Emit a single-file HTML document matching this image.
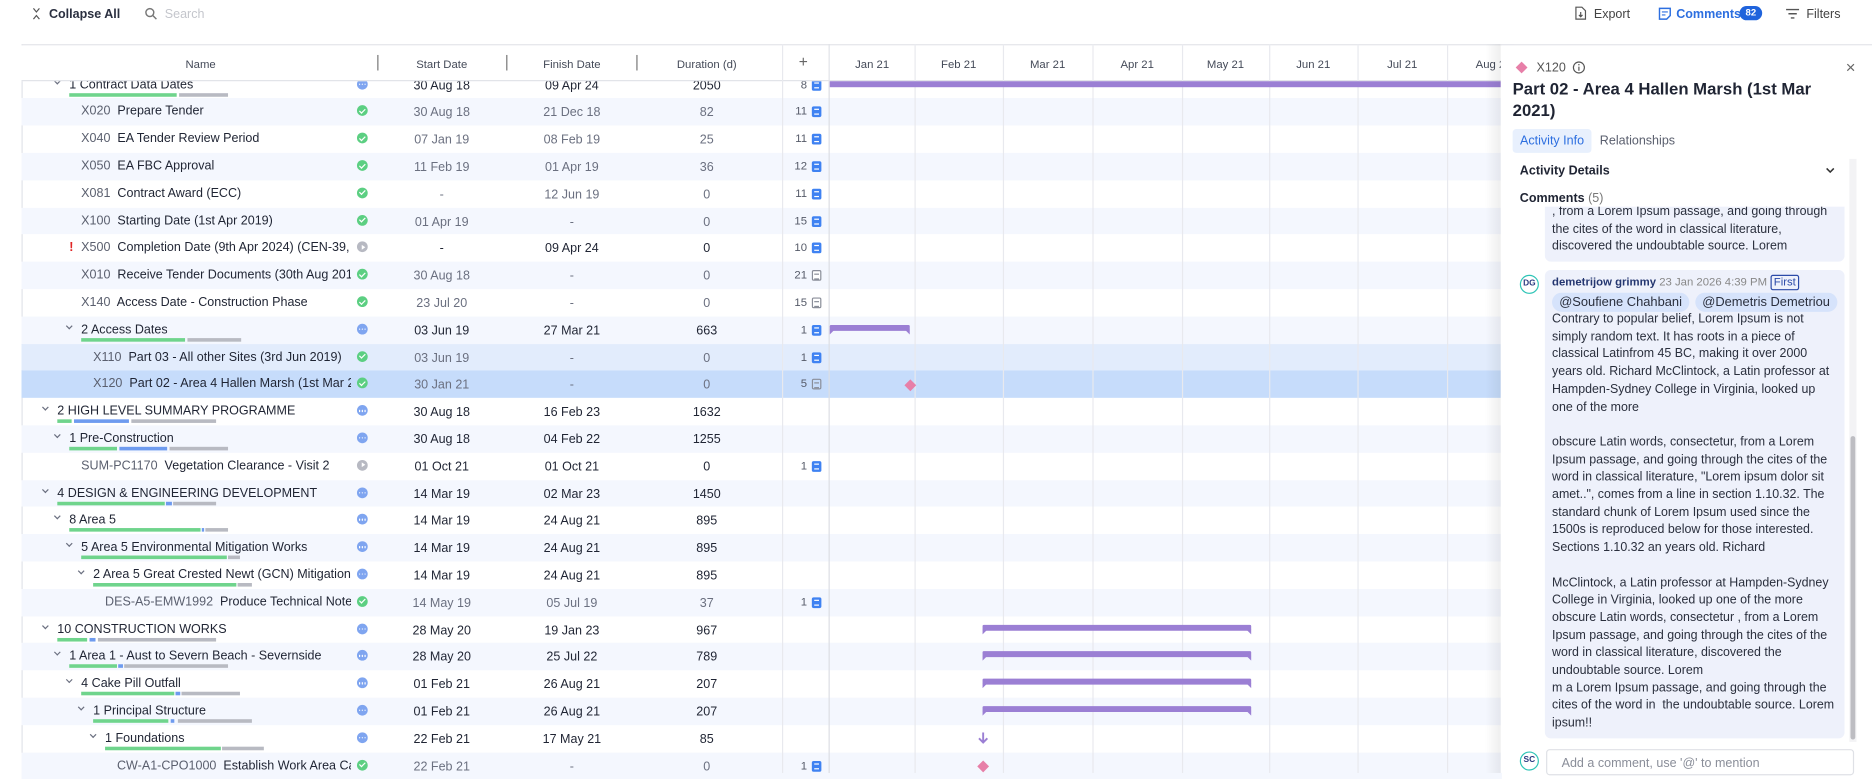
<!DOCTYPE html>
<html><head><meta charset="utf-8"><style>
*{box-sizing:border-box;margin:0;padding:0}
html,body{width:1872px;height:773px;overflow:hidden;background:#fff}
#s{position:absolute;left:0;top:0;width:1568px;height:647px;transform:scale(1.19388,1.1947);transform-origin:0 0;font-family:"Liberation Sans",sans-serif;color:#1f2433;font-size:10.5px}
.a{position:absolute}
.row{position:absolute;left:18px;width:1240px;height:22.8px}
.row.o{background:#f4f7fe}
.nm{position:absolute;top:5px;white-space:nowrap;overflow:hidden;font-size:10.5px}
.nm i{font-style:normal;color:#5a5f6e}
.c{position:absolute;top:6px;text-align:center;width:90px;font-size:10.5px}
.sd{left:307px}.fd{left:416px}.du{left:529px}
.g{color:#6b7080}
.st{position:absolute;left:281px;top:6px;width:9px;height:9px;border-radius:50%}
.ok{background:#5ccf82}
.ok:after{content:"";position:absolute;left:3px;top:1.5px;width:2px;height:4px;border:solid #fff;border-width:0 1.3px 1.3px 0;transform:rotate(45deg)}
.dt{background:#7fa5f0}
.dt:after{content:"";position:absolute;left:4px;top:4px;width:1.4px;height:1.4px;background:#fff;border-radius:50%;box-shadow:-2.3px 0 0 #fff,2.3px 0 0 #fff}
.pl{background:#b7b9c2}
.pl:after{content:"";position:absolute;left:3.5px;top:2.5px;border-left:3px solid #fff;border-top:2px solid transparent;border-bottom:2px solid transparent}
.cm{position:absolute;left:640px;top:6px;width:18px;text-align:right;font-size:9.5px;color:#555a68}
.ic{position:absolute;left:662px;top:7px;width:8px;height:9px;border-radius:1.5px;background:#3f82f2}
.ic:after{content:"";position:absolute;left:1.5px;top:2px;width:4px;height:3px;border-top:1px solid #fff;border-bottom:1px solid #fff}
.ic.gy{background:#fff;border:1px solid #8a8e99}
.ic.gy:after{left:1px;top:1.5px;border-color:#8a8e99}
.chev{position:absolute;top:6px;width:4px;height:4px;border:solid #6b7080;border-width:0 1px 1px 0;transform:rotate(45deg)}
.pb{position:absolute;height:3px;top:18px}
.G{background:#6fd48c}.B{background:#6e9bef}.Y{background:#b8bac2}
.vl{position:absolute;top:37px;width:1px;height:610px;background:#e8e9ee}
.hd{position:absolute;top:49px;font-size:9.5px;color:#444a58;text-align:center}
.bar{position:absolute;height:5px;background:#9b7fd4;border-radius:1px}
.bar:before,.bar:after{content:"";position:absolute;top:4px;border-top:4px solid #9b7fd4}
.bar:before{left:0;border-right:4px solid transparent}
.bar:after{right:0;border-left:4px solid transparent}
.dia{position:absolute;width:7px;height:7px;background:#e77fa8;transform:rotate(45deg)}
.cmt{font-size:10.4px;line-height:14.7px;color:#2a2f3d}
.chip{height:16px;padding:0 6px;border-radius:8px;background:#d6e3fb;font-size:10.8px;line-height:16px;color:#2a2f3d;white-space:nowrap;margin-right:5px}
</style></head><body><div id="s">

<!-- toolbar -->
<svg class="a" style="left:27px;top:6px" width="7" height="11" viewBox="0 0 7 11"><path d="M1 1l2.5 3L6 1M1 10l2.5-3L6 10" stroke="#555" fill="none"/></svg>
<div class="a" style="left:41px;top:6px;font-size:10.5px;font-weight:bold;color:#2b3040">Collapse All</div>
<svg class="a" style="left:121px;top:6px" width="11" height="11" viewBox="0 0 11 11"><circle cx="4.5" cy="4.5" r="3.3" fill="none" stroke="#777" stroke-width="1.2"/><path d="M7 7l3 3" stroke="#777" stroke-width="1.2"/></svg>
<div class="a" style="left:138px;top:6px;font-size:10.5px;color:#c4c6cc">Search</div>
<svg class="a" style="left:1319px;top:5px" width="10" height="12" viewBox="0 0 10 12"><path d="M1 1h5l3 3v7H1z" fill="none" stroke="#555" stroke-width="1"/><path d="M5 5v4M3.5 7.5L5 9l1.5-1.5" stroke="#555" fill="none"/></svg>
<div class="a" style="left:1335px;top:6px;font-size:10.5px;color:#444">Export</div>
<svg class="a" style="left:1389px;top:6px" width="11" height="11" viewBox="0 0 11 11"><path d="M1 1h9v6l-3 3H1z" fill="none" stroke="#2d6fe0" stroke-width="1.2"/><path d="M3 4h5M3 6.5h3" stroke="#2d6fe0"/></svg>
<div class="a" style="left:1404px;top:6px;font-size:10.5px;color:#2d6fe0;font-weight:bold">Comments</div>
<div class="a" style="left:1457px;top:5px;width:19px;height:12px;border-radius:6px;background:#1f63dc;color:#fff;font-size:8px;font-weight:bold;text-align:center;line-height:12px">82</div>
<svg class="a" style="left:1496px;top:7px" width="11" height="9" viewBox="0 0 11 9"><path d="M0 1h11M2 4.5h7M4 8h3" stroke="#555" stroke-width="1.2"/></svg>
<div class="a" style="left:1513px;top:6px;font-size:10.5px;color:#444">Filters</div>

<!-- grid frame -->
<div class="a" style="left:18px;top:37px;width:1250px;height:1px;background:#e1e3e8"></div>
<div class="a" style="left:18px;top:37px;width:1px;height:610px;background:#e1e3e8"></div>

<!-- rows -->
<div class="row" style="top:59.6px"><span class="chev" style="left:28px"></span><div class="nm" style="left:40px">1 Contract Data Dates</div><div class="pb G" style="left:40px;width:90px"></div><div class="pb Y" style="left:132px;width:41px"></div><div class="st dt"></div><div class="c sd">30 Aug 18</div><div class="c fd">09 Apr 24</div><div class="c du">2050</div><div class="cm">8</div><div class="ic"></div></div>
<div class="row o" style="top:82.4px"><div class="nm" style="left:50px"><i>X020</i>&nbsp; Prepare Tender</div><div class="st ok"></div><div class="c sd g">30 Aug 18</div><div class="c fd g">21 Dec 18</div><div class="c du g">82</div><div class="cm">11</div><div class="ic"></div></div>
<div class="row" style="top:105.2px"><div class="nm" style="left:50px"><i>X040</i>&nbsp; EA Tender Review Period</div><div class="st ok"></div><div class="c sd g">07 Jan 19</div><div class="c fd g">08 Feb 19</div><div class="c du g">25</div><div class="cm">11</div><div class="ic"></div></div>
<div class="row o" style="top:128px"><div class="nm" style="left:50px"><i>X050</i>&nbsp; EA FBC Approval</div><div class="st ok"></div><div class="c sd g">11 Feb 19</div><div class="c fd g">01 Apr 19</div><div class="c du g">36</div><div class="cm">12</div><div class="ic"></div></div>
<div class="row" style="top:150.8px"><div class="nm" style="left:50px"><i>X081</i>&nbsp; Contract Award (ECC)</div><div class="st ok"></div><div class="c sd g">-</div><div class="c fd g">12 Jun 19</div><div class="c du g">0</div><div class="cm">11</div><div class="ic"></div></div>
<div class="row o" style="top:173.6px"><div class="nm" style="left:50px"><i>X100</i>&nbsp; Starting Date (1st Apr 2019)</div><div class="st ok"></div><div class="c sd g">01 Apr 19</div><div class="c fd g">-</div><div class="c du g">0</div><div class="cm">15</div><div class="ic"></div></div>
<div class="row" style="top:196.4px"><div class="nm" style="left:40px;color:#e02424;font-weight:bold">!</div><div class="nm" style="left:50px;width:226px"><i>X500</i>&nbsp; Completion Date (9th Apr 2024) (CEN-39, </div><div class="st pl"></div><div class="c sd">-</div><div class="c fd">09 Apr 24</div><div class="c du">0</div><div class="cm">10</div><div class="ic"></div></div>
<div class="row o" style="top:219.2px"><div class="nm" style="left:50px;width:226px"><i>X010</i>&nbsp; Receive Tender Documents (30th Aug 2018)</div><div class="st ok"></div><div class="c sd g">30 Aug 18</div><div class="c fd g">-</div><div class="c du g">0</div><div class="cm">21</div><div class="ic gy"></div></div>
<div class="row" style="top:242px"><div class="nm" style="left:50px"><i>X140</i>&nbsp; Access Date - Construction Phase</div><div class="st ok"></div><div class="c sd g">23 Jul 20</div><div class="c fd g">-</div><div class="c du g">0</div><div class="cm">15</div><div class="ic gy"></div></div>
<div class="row o" style="top:264.8px"><span class="chev" style="left:38px"></span><div class="nm" style="left:50px">2 Access Dates</div><div class="pb G" style="left:50px;width:87px"></div><div class="pb Y" style="left:139px;width:45px"></div><div class="st dt"></div><div class="c sd">03 Jun 19</div><div class="c fd">27 Mar 21</div><div class="c du">663</div><div class="cm">1</div><div class="ic"></div></div>
<div class="row" style="top:287.6px;background:#e2ecfc"><div class="nm" style="left:60px"><i>X110</i>&nbsp; Part 03 - All other Sites (3rd Jun 2019)</div><div class="st ok"></div><div class="c sd g">03 Jun 19</div><div class="c fd g">-</div><div class="c du g">0</div><div class="cm">1</div><div class="ic"></div></div>
<div class="row" style="top:310.4px;background:#c6dcfb"><div class="nm" style="left:60px;width:216px"><i>X120</i>&nbsp; Part 02 - Area 4 Hallen Marsh (1st Mar 2021)</div><div class="st ok"></div><div class="c sd g">30 Jan 21</div><div class="c fd g">-</div><div class="c du g">0</div><div class="cm">5</div><div class="ic gy" style="background:transparent"></div></div>
<div class="row" style="top:333.2px"><span class="chev" style="left:18px"></span><div class="nm" style="left:30px">2 HIGH LEVEL SUMMARY PROGRAMME</div><div class="pb G" style="left:30px;width:12px"></div><div class="pb B" style="left:44px;width:46px"></div><div class="pb Y" style="left:92px;width:71px"></div><div class="st dt"></div><div class="c sd">30 Aug 18</div><div class="c fd">16 Feb 23</div><div class="c du">1632</div></div>
<div class="row o" style="top:356px"><span class="chev" style="left:28px"></span><div class="nm" style="left:40px">1 Pre-Construction</div><div class="pb G" style="left:40px;width:40px"></div><div class="pb B" style="left:82px;width:40px"></div><div class="pb Y" style="left:124px;width:49px"></div><div class="st dt"></div><div class="c sd">30 Aug 18</div><div class="c fd">04 Feb 22</div><div class="c du">1255</div></div>
<div class="row" style="top:378.8px"><div class="nm" style="left:50px"><i>SUM-PC1170</i>&nbsp; Vegetation Clearance - Visit 2</div><div class="st pl"></div><div class="c sd">01 Oct 21</div><div class="c fd">01 Oct 21</div><div class="c du">0</div><div class="cm">1</div><div class="ic"></div></div>
<div class="row o" style="top:401.6px"><span class="chev" style="left:18px"></span><div class="nm" style="left:30px">4 DESIGN &amp; ENGINEERING DEVELOPMENT</div><div class="pb G" style="left:30px;width:90px"></div><div class="pb B" style="left:121px;width:5px"></div><div class="pb Y" style="left:127px;width:36px"></div><div class="st dt"></div><div class="c sd">14 Mar 19</div><div class="c fd">02 Mar 23</div><div class="c du">1450</div></div>
<div class="row" style="top:424.4px"><span class="chev" style="left:28px"></span><div class="nm" style="left:40px">8 Area 5</div><div class="pb G" style="left:40px;width:110px"></div><div class="pb B" style="left:151px;width:2px"></div><div class="pb Y" style="left:154px;width:19px"></div><div class="st dt"></div><div class="c sd">14 Mar 19</div><div class="c fd">24 Aug 21</div><div class="c du">895</div></div>
<div class="row o" style="top:447.2px"><span class="chev" style="left:38px"></span><div class="nm" style="left:50px">5 Area 5 Environmental Mitigation Works</div><div class="pb G" style="left:50px;width:122px"></div><div class="pb Y" style="left:173px;width:10px"></div><div class="st dt"></div><div class="c sd">14 Mar 19</div><div class="c fd">24 Aug 21</div><div class="c du">895</div></div>
<div class="row" style="top:470px"><span class="chev" style="left:48px"></span><div class="nm" style="left:60px;width:216px">2 Area 5 Great Crested Newt (GCN) Mitigation</div><div class="pb G" style="left:60px;width:120px"></div><div class="pb Y" style="left:181px;width:12px"></div><div class="st dt"></div><div class="c sd">14 Mar 19</div><div class="c fd">24 Aug 21</div><div class="c du">895</div></div>
<div class="row o" style="top:492.8px"><div class="nm" style="left:70px;width:206px"><i>DES-A5-EMW1992</i>&nbsp; Produce Technical Notes</div><div class="st ok"></div><div class="c sd g">14 May 19</div><div class="c fd g">05 Jul 19</div><div class="c du g">37</div><div class="cm">1</div><div class="ic"></div></div>
<div class="row" style="top:515.6px"><span class="chev" style="left:18px"></span><div class="nm" style="left:30px">10 CONSTRUCTION WORKS</div><div class="pb G" style="left:30px;width:25px"></div><div class="pb B" style="left:57px;width:5px"></div><div class="pb Y" style="left:64px;width:99px"></div><div class="st dt"></div><div class="c sd">28 May 20</div><div class="c fd">19 Jan 23</div><div class="c du">967</div></div>
<div class="row o" style="top:538.4px"><span class="chev" style="left:28px"></span><div class="nm" style="left:40px">1 Area 1 - Aust to Severn Beach - Severnside</div><div class="pb G" style="left:40px;width:40px"></div><div class="pb B" style="left:81px;width:4px"></div><div class="pb Y" style="left:86px;width:87px"></div><div class="st dt"></div><div class="c sd">28 May 20</div><div class="c fd">25 Jul 22</div><div class="c du">789</div></div>
<div class="row" style="top:561.2px"><span class="chev" style="left:38px"></span><div class="nm" style="left:50px">4 Cake Pill Outfall</div><div class="pb G" style="left:50px;width:78px"></div><div class="pb B" style="left:129px;width:4px"></div><div class="pb Y" style="left:134px;width:49px"></div><div class="st dt"></div><div class="c sd">01 Feb 21</div><div class="c fd">26 Aug 21</div><div class="c du">207</div></div>
<div class="row o" style="top:584px"><span class="chev" style="left:48px"></span><div class="nm" style="left:60px">1 Principal Structure</div><div class="pb G" style="left:60px;width:63px"></div><div class="pb B" style="left:125px;width:3px"></div><div class="pb Y" style="left:131px;width:62px"></div><div class="st dt"></div><div class="c sd">01 Feb 21</div><div class="c fd">26 Aug 21</div><div class="c du">207</div></div>
<div class="row" style="top:606.8px"><span class="chev" style="left:58px"></span><div class="nm" style="left:70px">1 Foundations</div><div class="pb G" style="left:70px;width:97px"></div><div class="pb Y" style="left:168px;width:35px"></div><div class="st dt"></div><div class="c sd">22 Feb 21</div><div class="c fd">17 May 21</div><div class="c du">85</div></div>
<div class="row o" style="top:629.6px"><div class="nm" style="left:80px;width:196px"><i>CW-A1-CPO1000</i>&nbsp; Establish Work Area Cal</div><div class="st ok"></div><div class="c sd g">22 Feb 21</div><div class="c fd g">-</div><div class="c du g">0</div><div class="cm">1</div><div class="ic"></div></div>

<!-- vertical lines -->
<div class="vl" style="left:655px"></div><div class="vl" style="left:694px;background:#dcdee4"></div>
<div class="vl" style="left:766px"></div><div class="vl" style="left:840px"></div><div class="vl" style="left:915px"></div><div class="vl" style="left:990px"></div><div class="vl" style="left:1063px"></div><div class="vl" style="left:1137px"></div><div class="vl" style="left:1212px"></div>

<!-- header -->
<div class="a" style="left:18px;top:38px;width:1240px;height:30px;background:#fff;border-bottom:1.5px solid #e1e3e8"></div>
<div class="hd" style="left:18px;width:300px">Name</div>
<div class="hd" style="left:325px;width:90px">Start Date</div>
<div class="hd" style="left:434px;width:90px">Finish Date</div>
<div class="hd" style="left:547px;width:90px">Duration (d)</div>
<div class="a" style="left:316px;top:46px;width:1px;height:13px;background:#777"></div>
<div class="a" style="left:424px;top:46px;width:1px;height:13px;background:#777"></div>
<div class="a" style="left:533px;top:46px;width:1px;height:13px;background:#777"></div>
<div class="a" style="left:655px;top:38px;width:1px;height:30px;background:#e8e9ee"></div>
<div class="a" style="left:694px;top:38px;width:1px;height:30px;background:#e1e3e8"></div>
<div class="a" style="left:669px;top:44px;font-size:13px;color:#666">+</div>
<div class="hd" style="left:695px;width:71px">Jan 21</div>
<div class="hd" style="left:766px;width:74px">Feb 21</div>
<div class="hd" style="left:840px;width:75px">Mar 21</div>
<div class="hd" style="left:915px;width:75px">Apr 21</div>
<div class="hd" style="left:990px;width:73px">May 21</div>
<div class="hd" style="left:1063px;width:74px">Jun 21</div>
<div class="hd" style="left:1137px;width:75px">Jul 21</div>
<div class="hd" style="left:1212px;width:75px;text-align:left;padding-left:24px">Aug 21</div>
<div class="a" style="left:766px;top:38px;width:1px;height:30px;background:#e8e9ee"></div><div class="a" style="left:840px;top:38px;width:1px;height:30px;background:#e8e9ee"></div><div class="a" style="left:915px;top:38px;width:1px;height:30px;background:#e8e9ee"></div><div class="a" style="left:990px;top:38px;width:1px;height:30px;background:#e8e9ee"></div><div class="a" style="left:1063px;top:38px;width:1px;height:30px;background:#e8e9ee"></div><div class="a" style="left:1137px;top:38px;width:1px;height:30px;background:#e8e9ee"></div><div class="a" style="left:1212px;top:38px;width:1px;height:30px;background:#e8e9ee"></div>

<!-- gantt bars -->
<div class="a" style="left:695px;top:68px;width:565px;height:5px;background:#9b7fd4"></div>
<div class="bar" style="left:695px;top:272px;width:67px"></div>
<div class="dia" style="left:759px;top:318.5px"></div>
<div class="bar" style="left:823px;top:522.5px;width:225px"></div>
<div class="bar" style="left:823px;top:545.3px;width:225px"></div>
<div class="bar" style="left:823px;top:568.1px;width:225px"></div>
<div class="bar" style="left:823px;top:590.9px;width:225px"></div>
<svg class="a" style="left:819px;top:613px" width="9" height="10" viewBox="0 0 9 10"><path d="M4.5 0v8M1 5l3.5 3.5L8 5" stroke="#9b7fd4" stroke-width="1.6" fill="none"/></svg>
<div class="dia" style="left:820px;top:638px"></div>

<!-- side panel -->
<div class="a" style="left:1244px;top:37px;width:14px;height:610px;background:linear-gradient(90deg,rgba(0,0,0,0),rgba(0,0,0,0.07))"></div>
<div class="a" style="left:1257px;top:37px;width:311px;height:610px;background:#fff;border-top:1px solid #e1e3e8"></div>

<!-- comment cards -->
<div class="a" style="left:1294px;top:165px;width:251px;height:54px;background:#eef1fb;border-radius:0 0 5px 5px"></div>
<div class="a cmt" style="left:1300px;top:171px;width:245px;white-space:nowrap">, from a Lorem Ipsum passage, and going through<br>the cites of the word in classical literature,<br>discovered the undoubtable source. Lorem</div>

<div class="a" style="left:1273px;top:230px;width:16px;height:16px;border-radius:50%;border:1.3px solid #2ec4b6;font-size:7px;font-weight:bold;color:#2a3a80;text-align:center;line-height:13px">DG</div>
<div class="a" style="left:1294px;top:226px;width:251px;height:392px;background:#eef1fb;border-radius:5px"></div>
<div class="a" style="left:1300px;top:231px;font-size:9.5px;white-space:nowrap"><b style="color:#243670">demetrijow grimmy</b> <span style="color:#888">23 Jan 2026 4:39 PM</span> <span style="border:1px solid #2b4aa8;color:#2b4aa8;border-radius:2px;padding:0 2px">First</span></div>
<div class="a" style="left:1300px;top:245px;display:flex"><span class="chip">@Soufiene Chahbani</span><span class="chip">@Demetris Demetriou</span></div>
<div class="a cmt" style="left:1300px;top:261px;width:245px;white-space:nowrap">Contrary to popular belief, Lorem Ipsum is not<br>simply random text. It has roots in a piece of<br>classical Latinfrom 45 BC, making it over 2000<br>years old. Richard McClintock, a Latin professor at<br>Hampden-Sydney College in Virginia, looked up<br>one of the more<br><br>obscure Latin words, consectetur, from a Lorem<br>Ipsum passage, and going through the cites of the<br>word in classical literature, "Lorem ipsum dolor sit<br>amet..", comes from a line in section 1.10.32. The<br>standard chunk of Lorem Ipsum used since the<br>1500s is reproduced below for those interested.<br>Sections 1.10.32 an years old. Richard<br><br>McClintock, a Latin professor at Hampden-Sydney<br>College in Virginia, looked up one of the more<br>obscure Latin words, consectetur , from a Lorem<br>Ipsum passage, and going through the cites of the<br>word in classical literature, discovered the<br>undoubtable source. Lorem<br>m a Lorem Ipsum passage, and going through the<br>cites of the word in &nbsp;the undoubtable source. Lorem<br>ipsum!!</div>

<!-- panel header (covers scrolled content) -->
<div class="a" style="left:1258px;top:38px;width:310px;height:135px;background:#fff"></div>
<div class="a" style="left:1258px;top:619px;width:310px;height:28px;background:#fff"></div>
<div class="a" style="left:1271px;top:53px;width:7px;height:7px;background:#e77fa8;transform:rotate(45deg)"></div>
<div class="a" style="left:1287px;top:51px;font-size:10.5px;color:#555">X120</div>
<svg class="a" style="left:1317px;top:51px" width="11" height="11" viewBox="0 0 11 11"><circle cx="5.5" cy="5.5" r="4.6" fill="none" stroke="#555" stroke-width="1"/><path d="M5.5 4.8v3.4" stroke="#555"/><circle cx="5.5" cy="3.2" r=".6" fill="#555"/></svg>
<div class="a" style="left:1546px;top:48px;font-size:14px;color:#666">×</div>
<div class="a" style="left:1267px;top:66px;width:270px;font-size:14px;font-weight:bold;line-height:17.5px;color:#1f2433">Part 02 - Area 4 Hallen Marsh (1st Mar 2021)</div>
<div class="a" style="left:1267px;top:108px;width:66px;height:20px;background:#e8f0fd;border-radius:3px;color:#2d6fe0;font-size:10.5px;line-height:20px;text-align:center">Activity Info</div>
<div class="a" style="left:1340px;top:108px;font-size:10.5px;line-height:20px;color:#5a5f6e">Relationships</div>
<div class="a" style="left:1273px;top:137px;font-size:10.5px;font-weight:bold;color:#1f2433">Activity Details</div>
<svg class="a" style="left:1529px;top:140px" width="8" height="6" viewBox="0 0 8 6"><path d="M1 1l3 3 3-3" stroke="#333" stroke-width="1.3" fill="none"/></svg>
<div class="a" style="left:1273px;top:160px;font-size:10.5px;color:#1f2433"><b>Comments</b> <span style="color:#777">(5)</span></div>
<div class="a" style="left:1549px;top:133px;width:6px;height:488px;background:#f3f3f5"></div>
<div class="a" style="left:1550px;top:365px;width:4px;height:254px;background:#bdbdc2;border-radius:2px"></div>

<div class="a" style="left:1273px;top:629px;width:16px;height:16px;border-radius:50%;border:1.3px solid #2ec4b6;font-size:7px;font-weight:bold;color:#2a3a80;text-align:center;line-height:13px">SC</div>
<div class="a" style="left:1295px;top:627px;width:258px;height:22px;border:1px solid #dfe1e6;border-radius:3px;font-size:10.5px;color:#8a8e99;padding:5px 0 0 12px;background:#fff">Add a comment, use '@' to mention</div>

</div></body></html>
